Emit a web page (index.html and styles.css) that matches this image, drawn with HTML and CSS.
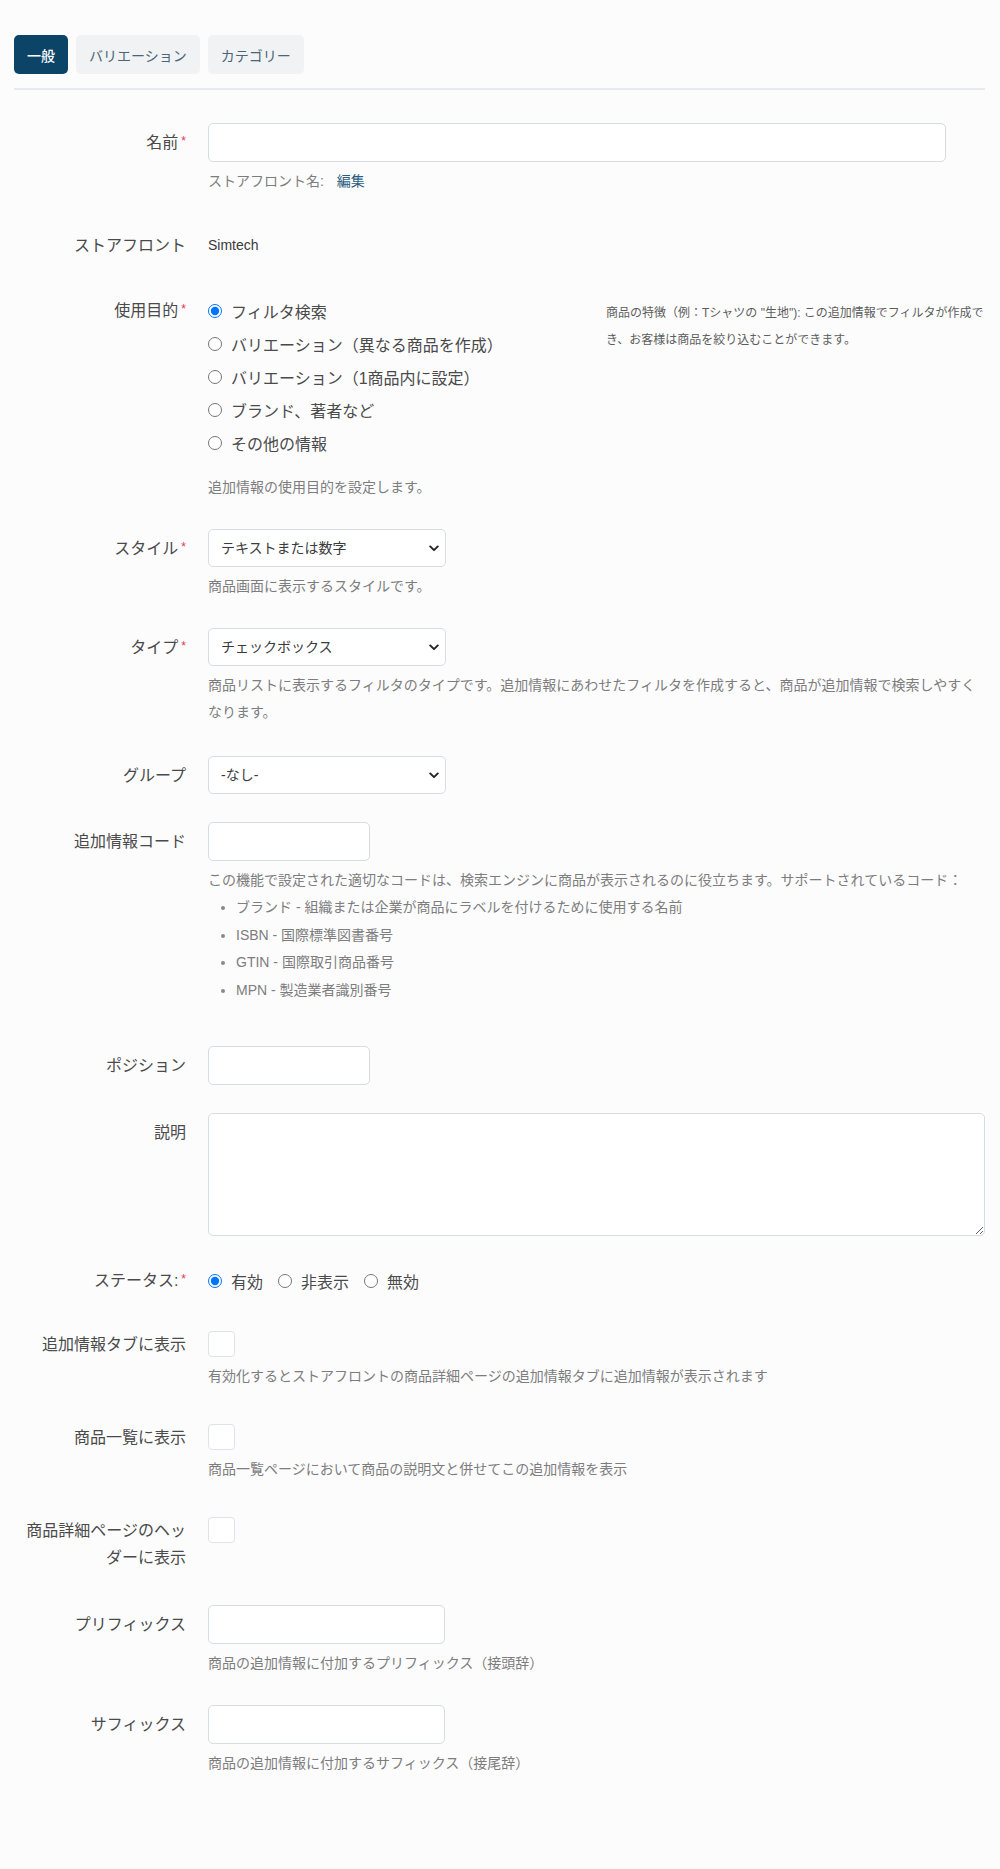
FILE: index.html
```html
<!DOCTYPE html>
<html lang="ja">
<head>
<meta charset="utf-8">
<title>追加情報の編集</title>
<link rel="stylesheet" href="styles.css">
</head>
<body>
<div class="page">
  <nav class="tabs">
    <a class="tab tab-active">一般</a>
    <a class="tab">バリエーション</a>
    <a class="tab">カテゴリー</a>
  </nav>

  <form class="form">
    <div class="row">
      <label class="label">名前<span class="req">*</span></label>
      <div class="control">
        <input class="input input-wide" type="text">
        <p class="help">ストアフロント名: <a class="link">編集</a></p>
      </div>
    </div>

    <div class="row">
      <div class="label label-static">ストアフロント</div>
      <div class="control static">Simtech</div>
    </div>

    <div class="row">
      <div class="label label-radio">使用目的<span class="req">*</span></div>
      <div class="control">
        <div class="purpose">
          <div class="radios">
            <label class="radio"><input type="radio" name="purpose" checked>フィルタ検索</label>
            <label class="radio"><input type="radio" name="purpose">バリエーション（異なる商品を作成）</label>
            <label class="radio"><input type="radio" name="purpose">バリエーション（1商品内に設定）</label>
            <label class="radio"><input type="radio" name="purpose">ブランド、著者など</label>
            <label class="radio"><input type="radio" name="purpose">その他の情報</label>
          </div>
          <p class="note">商品の特徴（例：Tシャツの "生地"): この追加情報でフィルタが作成でき、お客様は商品を絞り込むことができます。</p>
        </div>
        <p class="help help-spaced">追加情報の使用目的を設定します。</p>
      </div>
    </div>

    <div class="row">
      <label class="label">スタイル<span class="req">*</span></label>
      <div class="control">
        <div class="select-wrap">
          <select class="select"><option>テキストまたは数字</option></select>
          <svg class="chevron" width="10" height="7" viewBox="0 0 10 7"><path d="M1.2 1.4 5 5.2 8.8 1.4" fill="none" stroke="#222" stroke-width="1.9" stroke-linecap="round" stroke-linejoin="round"/></svg>
        </div>
        <p class="help">商品画面に表示するスタイルです。</p>
      </div>
    </div>

    <div class="row row-loose">
      <label class="label">タイプ<span class="req">*</span></label>
      <div class="control">
        <div class="select-wrap">
          <select class="select"><option>チェックボックス</option></select>
          <svg class="chevron" width="10" height="7" viewBox="0 0 10 7"><path d="M1.2 1.4 5 5.2 8.8 1.4" fill="none" stroke="#222" stroke-width="1.9" stroke-linecap="round" stroke-linejoin="round"/></svg>
        </div>
        <p class="help">商品リストに表示するフィルタのタイプです。追加情報にあわせたフィルタを作成すると、商品が追加情報で検索しやすくなります。</p>
      </div>
    </div>

    <div class="row">
      <label class="label">グループ</label>
      <div class="control">
        <div class="select-wrap">
          <select class="select"><option>-なし-</option></select>
          <svg class="chevron" width="10" height="7" viewBox="0 0 10 7"><path d="M1.2 1.4 5 5.2 8.8 1.4" fill="none" stroke="#222" stroke-width="1.9" stroke-linecap="round" stroke-linejoin="round"/></svg>
        </div>
      </div>
    </div>

    <div class="row">
      <label class="label">追加情報コード</label>
      <div class="control">
        <input class="input input-short" type="text">
        <p class="help">この機能で設定された適切なコードは、検索エンジンに商品が表示されるのに役立ちます。サポートされているコード：</p>
        <ul class="codes">
          <li>ブランド - 組織または企業が商品にラベルを付けるために使用する名前</li>
          <li>ISBN - 国際標準図書番号</li>
          <li>GTIN - 国際取引商品番号</li>
          <li>MPN - 製造業者識別番号</li>
        </ul>
      </div>
    </div>

    <div class="row">
      <label class="label">ポジション</label>
      <div class="control">
        <input class="input input-short" type="text">
      </div>
    </div>

    <div class="row">
      <label class="label">説明</label>
      <div class="control">
        <textarea class="textarea"></textarea>
      </div>
    </div>

    <div class="row">
      <div class="label label-radio">ステータス:<span class="req">*</span></div>
      <div class="control">
        <div class="radios-inline">
          <label class="radio"><input type="radio" name="status" checked>有効</label>
          <label class="radio"><input type="radio" name="status">非表示</label>
          <label class="radio"><input type="radio" name="status">無効</label>
        </div>
      </div>
    </div>

    <div class="row">
      <label class="label">追加情報タブに表示</label>
      <div class="control check-control">
        <input class="checkbox" type="checkbox">
        <p class="help">有効化するとストアフロントの商品詳細ページの追加情報タブに追加情報が表示されます</p>
      </div>
    </div>

    <div class="row">
      <label class="label">商品一覧に表示</label>
      <div class="control check-control">
        <input class="checkbox" type="checkbox">
        <p class="help">商品一覧ページにおいて商品の説明文と併せてこの追加情報を表示</p>
      </div>
    </div>

    <div class="row row-tall">
      <label class="label">商品詳細ページのヘッダーに表示</label>
      <div class="control check-control">
        <input class="checkbox" type="checkbox">
      </div>
    </div>

    <div class="row">
      <label class="label">プリフィックス</label>
      <div class="control">
        <input class="input input-medium" type="text">
        <p class="help">商品の追加情報に付加するプリフィックス（接頭辞）</p>
      </div>
    </div>

    <div class="row">
      <label class="label">サフィックス</label>
      <div class="control">
        <input class="input input-medium" type="text">
        <p class="help">商品の追加情報に付加するサフィックス（接尾辞）</p>
      </div>
    </div>
  </form>
</div>
</body>
</html>
```

FILE: styles.css
```css
* {
  box-sizing: border-box;
}

html {
  background: #fcfcfd;
}

body {
  margin: 0;
  background: #fcfcfd;
  color: #444;
  font-family: "Liberation Sans", "Noto Sans CJK JP", sans-serif;
}

.page {
  padding: 35px 15px 90px 14px;
}

/* Tabs */
.tabs {
  display: flex;
  gap: 8px;
  padding-bottom: 14px;
  border-bottom: 2px solid #e7ebef;
}

.tab {
  display: flex;
  align-items: center;
  height: 39px;
  padding: 0 13px;
  border-radius: 5px;
  background: #f1f2f3;
  color: #4a6479;
  font-size: 14px;
  text-decoration: none;
}

.tab-active {
  background: #0c4468;
  color: #ffffff;
  font-weight: 500;
}

/* Form */
.form {
  margin-top: 33px;
}

.row {
  display: grid;
  grid-template-columns: 172px 1fr;
  column-gap: 22px;
  margin-bottom: 28px;
}

.row-loose {
  margin-bottom: 30px;
}

.row-tall {
  margin-bottom: 34px;
}

.label {
  text-align: right;
  font-size: 16px;
  line-height: 27px;
  padding-top: 6px;
  color: #4a4a4a;
}

.label-static {
  padding-top: 9px;
}

.label-radio {
  padding-top: 3px;
}

.req {
  position: relative;
  top: -3px;
  margin-left: 3px;
  color: #e6364f;
  font-size: 12px;
  line-height: 0;
}

.control {
  min-width: 0;
}

.static {
  padding: 9px 0 7px;
  font-size: 14px;
  line-height: 27px;
  color: #3a3a3a;
}

/* Inputs */
.input {
  display: block;
  height: 39px;
  padding: 0 12px;
  border: 1px solid #d5dce3;
  border-radius: 5px;
  background: #fff;
  font-family: inherit;
  font-size: 14px;
  color: #333;
}

.input-wide {
  width: 95%;
}

.input-short {
  width: 162px;
}

.input-medium {
  width: 237px;
}

.select-wrap {
  position: relative;
  width: 238px;
}

.select {
  display: block;
  width: 100%;
  height: 38px;
  padding: 0 30px 0 12px;
  border: 1px solid #d5dce3;
  border-radius: 5px;
  background: #fff;
  font-family: inherit;
  font-size: 14px;
  color: #3a3a3a;
  -webkit-appearance: none;
  appearance: none;
}

.chevron {
  position: absolute;
  right: 7px;
  top: 16px;
  pointer-events: none;
}

.textarea {
  display: block;
  width: 100%;
  height: 123px;
  border: 1px solid #d5dce3;
  border-radius: 5px;
  background: #fff;
  font-family: inherit;
  font-size: 14px;
}

/* Radios */
.purpose {
  display: grid;
  grid-template-columns: 398px 1fr;
}

.radios {
  display: flex;
  flex-direction: column;
}

.radios-inline {
  display: flex;
  gap: 15px;
}

.radio {
  display: flex;
  align-items: center;
  gap: 9px;
  height: 33px;
  font-size: 16px;
  color: #4a4a4a;
  white-space: nowrap;
}

.radio input {
  margin: 0;
  width: 14px;
  height: 14px;
}

.note {
  margin: 0 -10px 0 0;
  padding-top: 6px;
  font-size: 12px;
  line-height: 27px;
  color: #5c5c5c;
}

/* Checkbox */
.check-control {
  padding-top: 6px;
}

.checkbox {
  display: block;
  margin: 0;
  width: 27px;
  height: 26px;
  border: 1px solid #dfe3e7;
  border-radius: 4px;
  background: #fff;
  -webkit-appearance: none;
  appearance: none;
}

/* Help */
.help {
  margin: 6px 0 0;
  font-size: 14px;
  line-height: 27px;
  color: #7d7d7d;
}

.help-spaced {
  margin-top: 15px;
}

.link {
  margin-left: 9px;
  color: #2a5d7f;
  text-decoration: none;
}

.codes {
  margin: 0 0 14px;
  padding-left: 28px;
  font-size: 14px;
  line-height: 27.5px;
  color: #7d7d7d;
}

.codes li::marker {
  color: #8a8a8a;
}
```
